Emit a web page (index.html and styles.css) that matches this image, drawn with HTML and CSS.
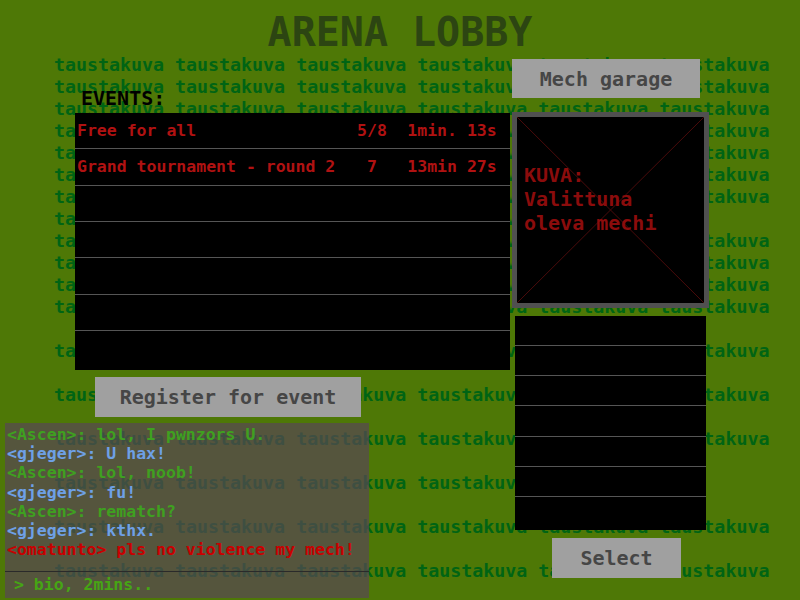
FILE: index.html
```html
<!DOCTYPE html>
<html lang="fi">
<head>
<meta charset="utf-8">
<title>Arena Lobby</title>
<link rel="stylesheet" href="styles.css">
</head>
<body>
<div class="screen">
  <div class="backdrop" aria-hidden="true">
    <div class="bg-line">taustakuva taustakuva taustakuva taustakuva taustakuva taustakuva</div>
    <div class="bg-line">taustakuva taustakuva taustakuva taustakuva taustakuva taustakuva</div>
    <div class="bg-line">taustakuva taustakuva taustakuva taustakuva taustakuva taustakuva</div>
    <div class="bg-line">taustakuva taustakuva taustakuva taustakuva taustakuva taustakuva</div>
    <div class="bg-line">taustakuva taustakuva taustakuva taustakuva taustakuva taustakuva</div>
    <div class="bg-line">taustakuva taustakuva taustakuva taustakuva taustakuva taustakuva</div>
    <div class="bg-line">taustakuva taustakuva taustakuva taustakuva taustakuva taustakuva</div>
    <div class="bg-line">taustakuva taustakuva taustakuva taustakuva taustakuva</div>
    <div class="bg-line">taustakuva taustakuva taustakuva taustakuva taustakuva taustakuva</div>
    <div class="bg-line">taustakuva taustakuva taustakuva taustakuva taustakuva taustakuva</div>
    <div class="bg-line">taustakuva taustakuva taustakuva taustakuva taustakuva taustakuva</div>
    <div class="bg-line">taustakuva taustakuva taustakuva taustakuva taustakuva taustakuva</div>
    <div class="bg-line"></div>
    <div class="bg-line">taustakuva taustakuva taustakuva taustakuva taustakuva taustakuva</div>
    <div class="bg-line"></div>
    <div class="bg-line">taustakuva taustakuva taustakuva taustakuva taustakuva taustakuva</div>
    <div class="bg-line"></div>
    <div class="bg-line">taustakuva taustakuva taustakuva taustakuva taustakuva taustakuva</div>
    <div class="bg-line"></div>
    <div class="bg-line">taustakuva taustakuva taustakuva taustakuva taustakuva</div>
    <div class="bg-line"></div>
    <div class="bg-line">taustakuva taustakuva taustakuva taustakuva taustakuva taustakuva</div>
    <div class="bg-line"></div>
    <div class="bg-line">taustakuva taustakuva taustakuva taustakuva taustakuva taustakuva</div>
  </div>

  <div class="ui">
    <h1 class="title">ARENA LOBBY</h1>
    <div class="main">
      <section class="left">
        <div class="events-label">EVENTS:</div>
        <div class="events">
          <div class="event-row"><span class="ev-name">Free for all</span><span class="ev-players">5/8</span><span class="ev-time">1min. 13s</span></div>
          <div class="event-row"><span class="ev-name">Grand tournament - round 2</span><span class="ev-players">7</span><span class="ev-time">13min 27s</span></div>
          <div class="event-row"></div>
          <div class="event-row"></div>
          <div class="event-row"></div>
          <div class="event-row"></div>
          <div class="event-row"></div>
        </div>
        <button class="btn btn-register">Register for event</button>
        <div class="chat">
          <div class="chat-log">
            <div class="msg ascen">&lt;Ascen&gt;: lol, I pwnzors U.</div>
            <div class="msg gjeger">&lt;gjeger&gt;: U hax!</div>
            <div class="msg ascen">&lt;Ascen&gt;: lol, noob!</div>
            <div class="msg gjeger">&lt;gjeger&gt;: fu!</div>
            <div class="msg ascen">&lt;Ascen&gt;: rematch?</div>
            <div class="msg gjeger">&lt;gjeger&gt;: kthx.</div>
            <div class="msg self">&lt;omatunto&gt; pls no violence my mech!</div>
          </div>
          <div class="chat-input">&gt; bio, 2mins..</div>
        </div>
      </section>
      <aside class="right">
        <button class="btn btn-garage">Mech garage</button>
        <div class="mech-pic">
          <div class="mech-pic-text">KUVA:<br>Valittuna<br>oleva mechi</div>
        </div>
        <div class="mech-list">
          <div class="mech-row"></div>
          <div class="mech-row"></div>
          <div class="mech-row"></div>
          <div class="mech-row"></div>
          <div class="mech-row"></div>
          <div class="mech-row"></div>
          <div class="mech-row"></div>
        </div>
        <button class="btn btn-select">Select</button>
      </aside>
    </div>
  </div>
</div>
</body>
</html>
```

FILE: styles.css
```css
* { box-sizing: border-box; }

html, body {
  margin: 0;
  padding: 0;
  background: #4e7806;
}

body {
  font-family: "DejaVu Sans Mono", "Liberation Mono", monospace;
}

.screen {
  position: relative;
  width: 800px;
  height: 600px;
  overflow: hidden;
  background: #4e7806;
}

.backdrop {
  position: absolute;
  left: 54px;
  top: 54px;
  font-family: "DejaVu Sans Mono", monospace;
  font-weight: bold;
  font-size: 18.3px;
  line-height: 22px;
  color: #006414;
}

.bg-line {
  height: 22px;
  white-space: nowrap;
}

.ui {
  position: relative;
}

.title {
  margin: 0;
  height: 56px;
  padding-top: 9px;
  font-size: 40px;
  line-height: 46px;
  font-weight: bold;
  text-align: center;
  color: #2c4512;
}

.main {
  display: flex;
  align-items: flex-start;
}

.left {
  width: 510px;
  display: flex;
  flex-direction: column;
  align-items: flex-start;
  padding-top: 30px;
}

.events-label {
  margin-left: 81px;
  font-size: 20px;
  line-height: 24px;
  font-weight: bold;
  color: #000;
}

.events {
  margin-left: 75px;
  margin-top: 3px;
  width: 435px;
  height: 257px;
  background: #000;
  display: flex;
  flex-direction: column;
}

.event-row {
  height: 36.33px;
  flex: none;
  border-bottom: 1px solid #555;
  display: grid;
  grid-template-columns: 265px 60px 100px;
  align-items: center;
  padding-left: 2px;
  color: #b01212;
  font-size: 16.5px;
  font-weight: bold;
  white-space: nowrap;
}

.event-row:last-child {
  border-bottom: none;
  flex: 1;
}

.ev-players,
.ev-time {
  text-align: center;
}

.btn {
  border: none;
  padding: 0;
  margin: 0;
  background: #a0a0a0;
  color: #464646;
  font-family: "DejaVu Sans Mono", monospace;
  font-weight: bold;
  font-size: 20px;
  text-align: center;
}

.btn-register {
  margin-left: 95px;
  margin-top: 7px;
  width: 266px;
  height: 40px;
}

.chat {
  margin-left: 5px;
  margin-top: 6px;
  width: 364px;
  height: 175px;
  background: rgba(88, 70, 86, 0.7);
  font-size: 16.5px;
  font-weight: bold;
}

.chat-log {
  height: 149px;
  padding: 2px 0 0 2px;
  border-bottom: 1px solid #2a2a2a;
}

.msg {
  line-height: 19.2px;
  white-space: nowrap;
}

.ascen { color: #3fa020; }
.gjeger { color: #6ea0e6; }
.self { color: #c80000; }

.chat-input {
  height: 25px;
  line-height: 25px;
  padding-left: 9px;
  color: #46a514;
}

.right {
  width: 210px;
  display: flex;
  flex-direction: column;
  align-items: flex-start;
  padding-top: 3px;
}

.btn-garage {
  margin-left: 2px;
  width: 188px;
  height: 39px;
}

.mech-pic {
  margin-left: 2px;
  margin-top: 14px;
  width: 197px;
  height: 196px;
  border: 5px solid #505050;
  background:
    linear-gradient(to bottom right, transparent calc(50% - 0.7px), #4a0a0a 50%, transparent calc(50% + 0.7px)),
    linear-gradient(to top right, transparent calc(50% - 0.7px), #4a0a0a 50%, transparent calc(50% + 0.7px)),
    #000;
}

.mech-pic-text {
  padding: 46px 0 0 7px;
  font-weight: bold;
  font-size: 20px;
  line-height: 24px;
  color: #8b0c0c;
}

.mech-list {
  margin-left: 5px;
  margin-top: 8px;
  width: 191px;
  height: 214px;
  background: #000;
  display: flex;
  flex-direction: column;
}

.mech-row {
  height: 30.17px;
  flex: none;
  border-bottom: 1px solid #555;
}

.mech-row:last-child {
  border-bottom: none;
  flex: 1;
}

.btn-select {
  margin-left: 42px;
  margin-top: 8px;
  width: 129px;
  height: 40px;
}
```
